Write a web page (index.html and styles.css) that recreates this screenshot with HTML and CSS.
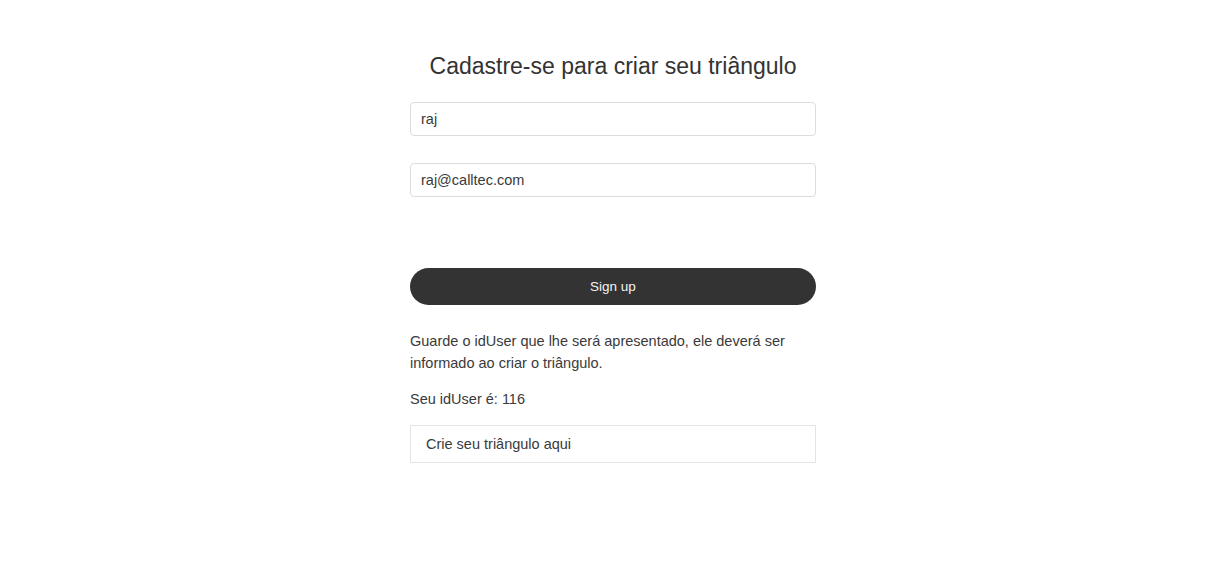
FILE: index.html
```html
<!DOCTYPE html>
<html lang="pt">
<head>
<meta charset="utf-8">
<title>Cadastro</title>
<link rel="stylesheet" href="styles.css">
</head>
<body>
<main class="signup">
  <h1 class="title">Cadastre-se para criar seu triângulo</h1>
  <input class="field field-name" type="text" value="raj">
  <input class="field field-email" type="email" value="raj@calltec.com">
  <button class="btn-signup" type="button">Sign up</button>
  <p class="note">Guarde o idUser que lhe será apresentado, ele deverá ser informado ao criar o triângulo.</p>
  <p class="userid">Seu idUser é: 116</p>
  <a class="create-link" href="#">Crie seu triângulo aqui</a>
</main>
</body>
</html>
```
FILE: styles.css
```css
html, body {
  margin: 0;
  padding: 0;
  background: #fff;
}
body {
  font-family: "Liberation Sans", Arial, sans-serif;
  color: #3a3a3a;
}
.signup {
  width: 406px;
  margin: 0 auto;
  padding-top: 53px;
  display: flex;
  flex-direction: column;
}
.title {
  margin: 0;
  font-size: 23px;
  font-weight: normal;
  line-height: 26px;
  text-align: center;
  color: #333;
}
.field {
  box-sizing: border-box;
  width: 100%;
  height: 34px;
  border: 1px solid #dcdcdc;
  border-radius: 4px;
  padding: 0 10px;
  font-family: inherit;
  font-size: 14.5px;
  color: #3a3a3a;
  outline: none;
}
.field-name {
  margin-top: 23px;
}
.field-email {
  margin-top: 27px;
}
.btn-signup {
  margin-top: 71px;
  height: 37px;
  width: 100%;
  border: none;
  border-radius: 19px;
  background: #333;
  color: #f4f4f4;
  font-family: inherit;
  font-size: 13.5px;
}
.note {
  margin: 25px 0 0;
  font-size: 14.5px;
  line-height: 22px;
}
.userid {
  margin: 14px 0 0;
  font-size: 14.5px;
  line-height: 22px;
}
.create-link {
  box-sizing: border-box;
  margin-top: 15px;
  height: 38px;
  display: flex;
  align-items: center;
  padding: 0 15px;
  border: 1px solid #e3e3e3;
  font-size: 14.5px;
  color: #3a3a3a;
  text-decoration: none;
}
```
